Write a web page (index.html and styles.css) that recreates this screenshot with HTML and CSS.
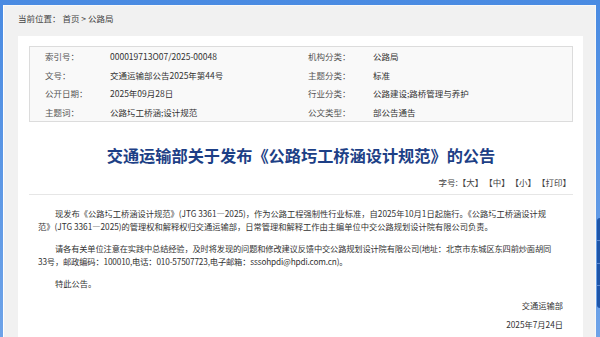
FILE: index.html
```html
<!DOCTYPE html>
<html lang="zh-CN">
<head>
<meta charset="UTF-8">
<title>交通运输部关于发布《公路圬工桥涵设计规范》的公告</title>
<link rel="stylesheet" href="styles.css">
</head>
<body>
<div class="frame">
  <div class="panel">
    <div class="crumb">当前位置：&nbsp;首页 &gt; 公路局</div>

    <div class="article">
      <div class="meta">
        <span class="lbl">索引号：</span><span class="val">000019713O07/2025-00048</span>
        <span class="lbl">机构分类：</span><span class="val">公路局</span>
        <span class="lbl">文号：</span><span class="val">交通运输部公告2025年第44号</span>
        <span class="lbl">主题分类：</span><span class="val">标准</span>
        <span class="lbl">公开日期：</span><span class="val">2025年09月28日</span>
        <span class="lbl">行业分类：</span><span class="val">公路建设;路桥管理与养护</span>
        <span class="lbl">主题词：</span><span class="val">公路圬工桥涵;设计规范</span>
        <span class="lbl">公文类型：</span><span class="val">部公告通告</span>
      </div>

      <h1 class="title">交通运输部关于发布《公路圬工桥涵设计规范》的公告</h1>

      <div class="tools">字号:【大】 【中】 【小】 【打印】</div>

      <div class="body">
        <p>现发布《公路圬工桥涵设计规范》(JTG 3361—2025)，作为公路工程强制性行业标准，自2025年10月1日起施行。《公路圬工桥涵设计规范》(JTG 3361—2025)的管理权和解释权归交通运输部，日常管理和解释工作由主编单位中交公路规划设计院有限公司负责。</p>
        <p class="tight">请各有关单位注意在实践中总结经验，及时将发现的问题和修改建议反馈中交公路规划设计院有限公司(地址：北京市东城区东四前炒面胡同33号，邮政编码：100010,电话：010-57507723,电子邮箱：sssohpdi@hpdi.com.cn)。</p>
        <p>特此公告。</p>
        <div class="sign">交通运输部</div>
        <div class="sign date">2025年7月24日</div>
      </div>
    </div>
  </div>
</div>

<div class="side">
  <span></span><span></span><span></span><span></span>
</div>
</body>
</html>
```

FILE: styles.css
```css
:root{
  --blue:#4a89dc;
  --title:#1d3f86;
  --text:#333;
  --line:#dcdcdc;
}
*{box-sizing:border-box;margin:0;padding:0;}
html,body{height:100%;overflow:hidden;}
body{
  font-family:"Noto Sans CJK SC","Noto Sans",sans-serif;
  font-size:8.5px;
  color:var(--text);
  background:linear-gradient(#4a8be2,#6ea3e8);
}
.frame{height:100%;padding:5px 4px 0 3px;}
.panel{
  height:100%;
  background:#f1f1f1;
  border-top:1px solid #f8f8f8;
  border-left:1px solid #fff;
  border-right:1px solid #f8f8f8;
  padding:0 12px 0 14px;
}
.crumb{padding:6px 0 11px;line-height:13px;color:#444;}
.article{background:#fff;height:100%;padding:10px 10px 0 11px;}

.meta{
  display:grid;
  grid-template-columns:65px 198px 65px 1fr;
  background:#f9f9f9;
  border:1px solid var(--line);
  padding:0 0 0 15px;
}
.meta span{line-height:18.5px;}
.lbl{color:#555;}
.val{color:#333;}

.title{
  margin-top:22px;
  text-align:center;
  font-size:16.2px;
  line-height:22px;
  font-weight:bold;
  color:var(--title);
}
.tools{
  margin-top:10px;
  text-align:right;
  line-height:13px;
  padding:0 2px 5px 0;
  border-bottom:1px solid #e6e6e6;
  color:#444;
  word-spacing:-1px;
}
.body{padding:12px 18px 0 9px;font-size:8.25px;}
.body p{line-height:13px;text-indent:17px;margin-bottom:9px;}
.body p.tight{letter-spacing:-0.16px;}
.sign{text-align:right;line-height:13px;margin-right:-8px;margin-top:9px;}
.sign.date{margin-top:6px;}

.side{
  position:fixed;
  left:597px;
  top:218px;
  width:30px;
  height:90px;
  background:#1e55a8;
  border-radius:3px;
  display:flex;
  flex-direction:column;
}
.side span{flex:1;border-bottom:1px solid #5f8ad0;}
.side span:last-child{border-bottom:none;}
```
